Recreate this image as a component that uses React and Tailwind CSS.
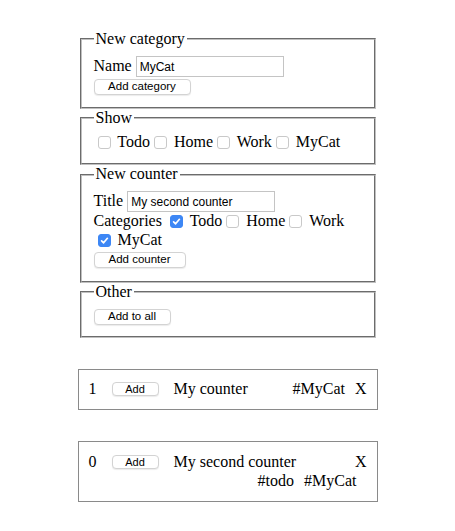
const CATEGORIES = ["Todo", "Home", "Work", "MyCat"];

function Check({ checked }) {
  return (
    <span
      className={`relative inline-block w-[13px] h-[13px] ml-1 mr-[3px] align-[-2px] rounded-[3px] border ${
        checked ? "bg-[#3d87f5] border-[#3d87f5]" : "bg-white border-[#c9c9c9]"
      }`}
    >
      {checked && (
        <svg viewBox="0 0 13 13" className="absolute -left-px -top-px w-[13px] h-[13px]">
          <path
            d="M3.6 6.9 L5.6 8.8 L9.4 4.3"
            stroke="white"
            strokeWidth="1.7"
            fill="none"
            strokeLinecap="round"
            strokeLinejoin="round"
          />
        </svg>
      )}
    </span>
  );
}

function Btn({ children, className = "" }) {
  return (
    <button
      className={`flex items-center justify-center bg-white border border-[#d3d3d3] rounded-[4px] shadow-[0_1px_1px_rgba(0,0,0,0.08)] font-['Liberation_Sans',sans-serif] text-[11.5px] leading-none text-black ${className}`}
    >
      {children}
    </button>
  );
}

function InputRow({ label, value }) {
  return (
    <div className="h-[23px] pt-[2px] flex items-baseline gap-1">
      <span>{label}</span>
      <input
        readOnly
        value={value}
        className="w-[148px] h-[21px] border border-[#c4c4c4] bg-white px-[3px] font-['Liberation_Sans',sans-serif] text-[12px] text-black"
      />
    </div>
  );
}

function Box({ legend, children, className = "" }) {
  return (
    <fieldset
      className={`mx-[2px] border-2 border-[#c0c0c0] [border-style:groove] px-3 pt-[5.6px] ${className}`}
    >
      <legend className="px-0.5">{legend}</legend>
      {children}
    </fieldset>
  );
}

function Counter({ count, title, tags, wrapTags }) {
  return (
    <div className="mt-[31px] border border-[#8a8a8a] px-[10px] py-[10px]">
      <div className={`flex items-center ${wrapTags ? "h-[19px] mt-px" : "h-[18.4px]"}`}>
        <span className="w-[23px]">{count}</span>
        <Btn className="w-[47px] h-[14px] text-[11px]">Add</Btn>
        <span className="ml-[15px]">{title}</span>
        <span className="ml-auto flex gap-[10px] mr-[10px]">
          {!wrapTags && tags.map((t) => <span key={t}>#{t}</span>)}
        </span>
        <span>X</span>
      </div>
      {wrapTags && (
        <div className="flex justify-end gap-[10px] pr-[10px] h-[19px] items-center">
          {tags.map((t) => (
            <span key={t}>#{t}</span>
          ))}
        </div>
      )}
    </div>
  );
}

export default function App() {
  return (
    <div className="min-h-screen bg-white font-['Liberation_Serif',serif] text-[16px] leading-[18.4px] text-black">
      <div className="w-[300px] mx-auto pt-[30px]">
        {/* New category */}
        <Box legend="New category" className="pb-[11px]">
          <InputRow label="Name" value="MyCat" />
          <div className="h-[19px] pt-[2px]">
            <Btn className="w-[97px] h-4">Add category</Btn>
          </div>
        </Box>

        {/* Show */}
        <Box legend="Show" className="pb-[12px]">
          <div>
            {CATEGORIES.map((c) => (
              <label key={c}>
                <Check /> {c}
              </label>
            ))}
          </div>
        </Box>

        {/* New counter */}
        <Box legend="New counter" className="pb-[12px]">
          <InputRow label="Title" value="My second counter" />
          <div>
            Categories{" "}
            {CATEGORIES.map((c) => (
              <label key={c}>
                <Check checked={c === "Todo" || c === "MyCat"} /> {c}
              </label>
            ))}
          </div>
          <div className="h-[20px] pt-[3px]">
            <Btn className="w-[92px] h-4">Add counter</Btn>
          </div>
        </Box>

        {/* Other */}
        <Box legend="Other" className="pb-[10px]">
          <div className="h-[19px] pt-[2px]">
            <Btn className="w-[77px] h-4">Add to all</Btn>
          </div>
        </Box>

        <Counter count={1} title="My counter" tags={["MyCat"]} />
        <Counter count={0} title="My second counter" tags={["todo", "MyCat"]} wrapTags />
      </div>
    </div>
  );
}
